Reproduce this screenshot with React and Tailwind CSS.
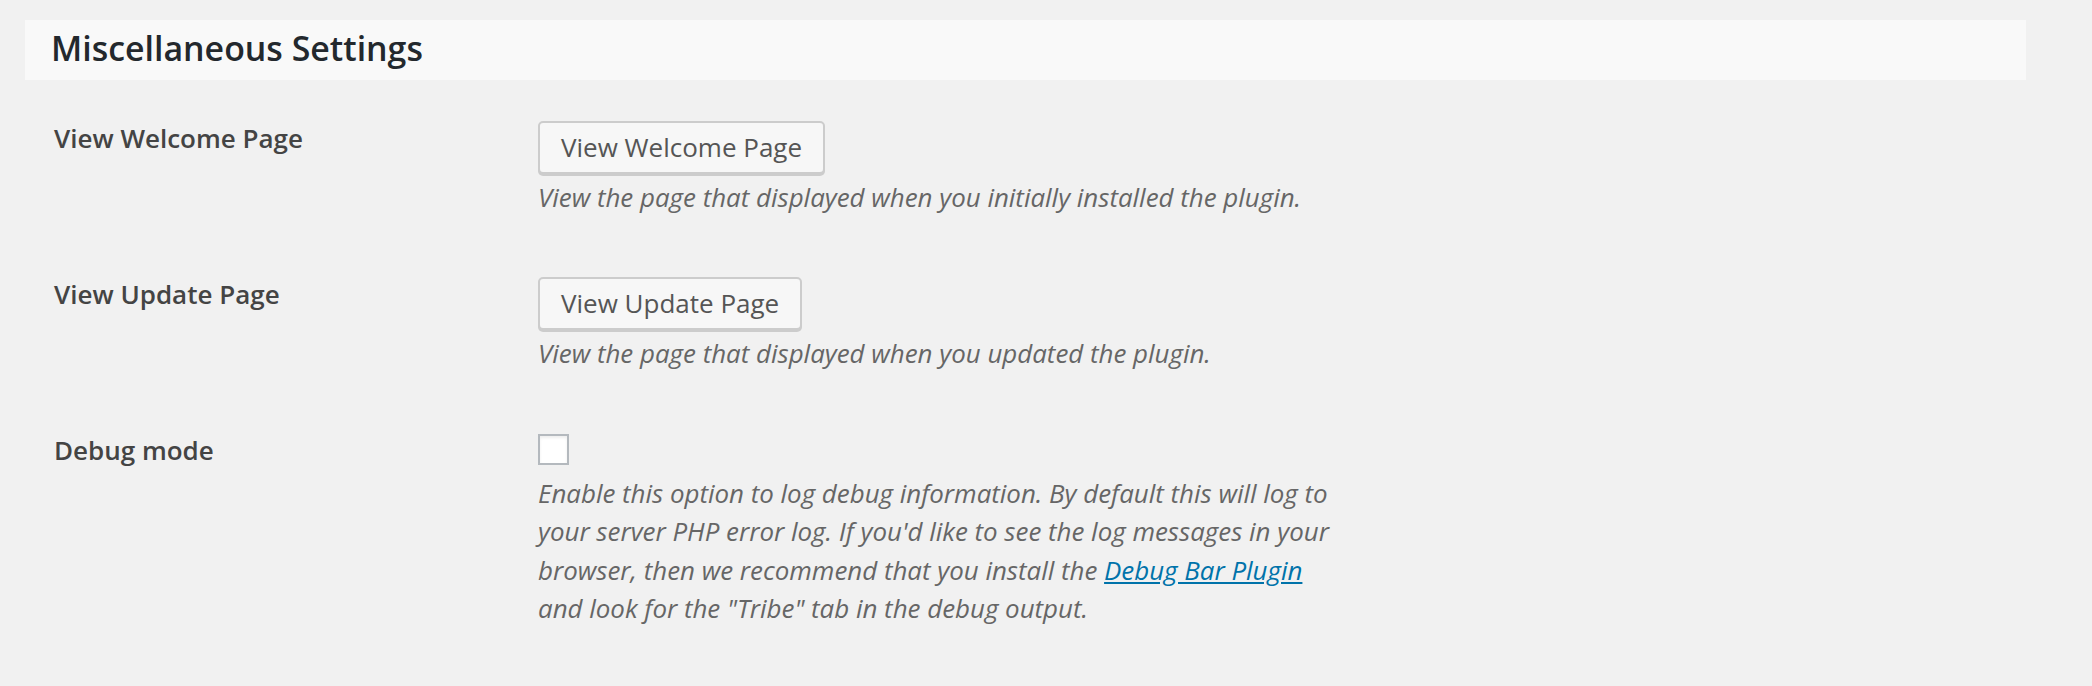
import React from "react";

const rows = [
  {
    label: "View Welcome Page",
    button: "View Welcome Page",
    help: "View the page that displayed when you initially installed the plugin.",
  },
  {
    label: "View Update Page",
    button: "View Update Page",
    help: "View the page that displayed when you updated the plugin.",
  },
];

function SettingRow({ label, children }) {
  return (
    <div className="grid grid-cols-[484px_1fr] py-[30px]">
      <div className="text-[26px] leading-[36px] font-semibold text-[#444]">{label}</div>
      <div>{children}</div>
    </div>
  );
}

export default function App() {
  return (
    <div className="min-h-screen bg-[#f1f1f1] pt-[20px] pl-[25px] font-['Open_Sans',sans-serif]">
      <div className="w-[2001px] h-[60px] bg-[#f9f9f9] pl-[26px] pt-[5px]">
        <h2 className="text-[33.9px] leading-[47px] font-semibold text-[#23282d]">
          Miscellaneous Settings
        </h2>
      </div>

      <div className="mt-[10px] pl-[29px]">
        {rows.map((r) => (
          <SettingRow key={r.label} label={r.label}>
            <button
              type="button"
              className="mt-[1px] h-[53px] px-[21px] border-2 border-[#cccccc] rounded-[5px] bg-[#f7f7f7] shadow-[0_2px_0_#cccccc] text-[26px] leading-[49px] text-[#555]"
            >
              {r.button}
            </button>
            <p className="mt-[5px] text-[25.9px] leading-[37px] italic text-[#666]">{r.help}</p>
          </SettingRow>
        ))}

        <SettingRow label="Debug mode">
          <div className="mt-[2px] w-[31px] h-[31px] border-2 border-[#b4b9be] bg-white shadow-[inset_0_2px_3px_rgba(0,0,0,0.07)]" />
          <p className="mt-[9px] text-[25.9px] leading-[38.3px] italic text-[#666]">
            Enable this option to log debug information. By default this will log to
            <br />
            your server PHP error log. If you'd like to see the log messages in your
            <br />
            browser, then we recommend that you install the{" "}
            <a href="#" className="text-[#0073aa] underline">
              Debug Bar Plugin
            </a>
            <br />
            and look for the "Tribe" tab in the debug output.
          </p>
        </SettingRow>
      </div>
    </div>
  );
}
